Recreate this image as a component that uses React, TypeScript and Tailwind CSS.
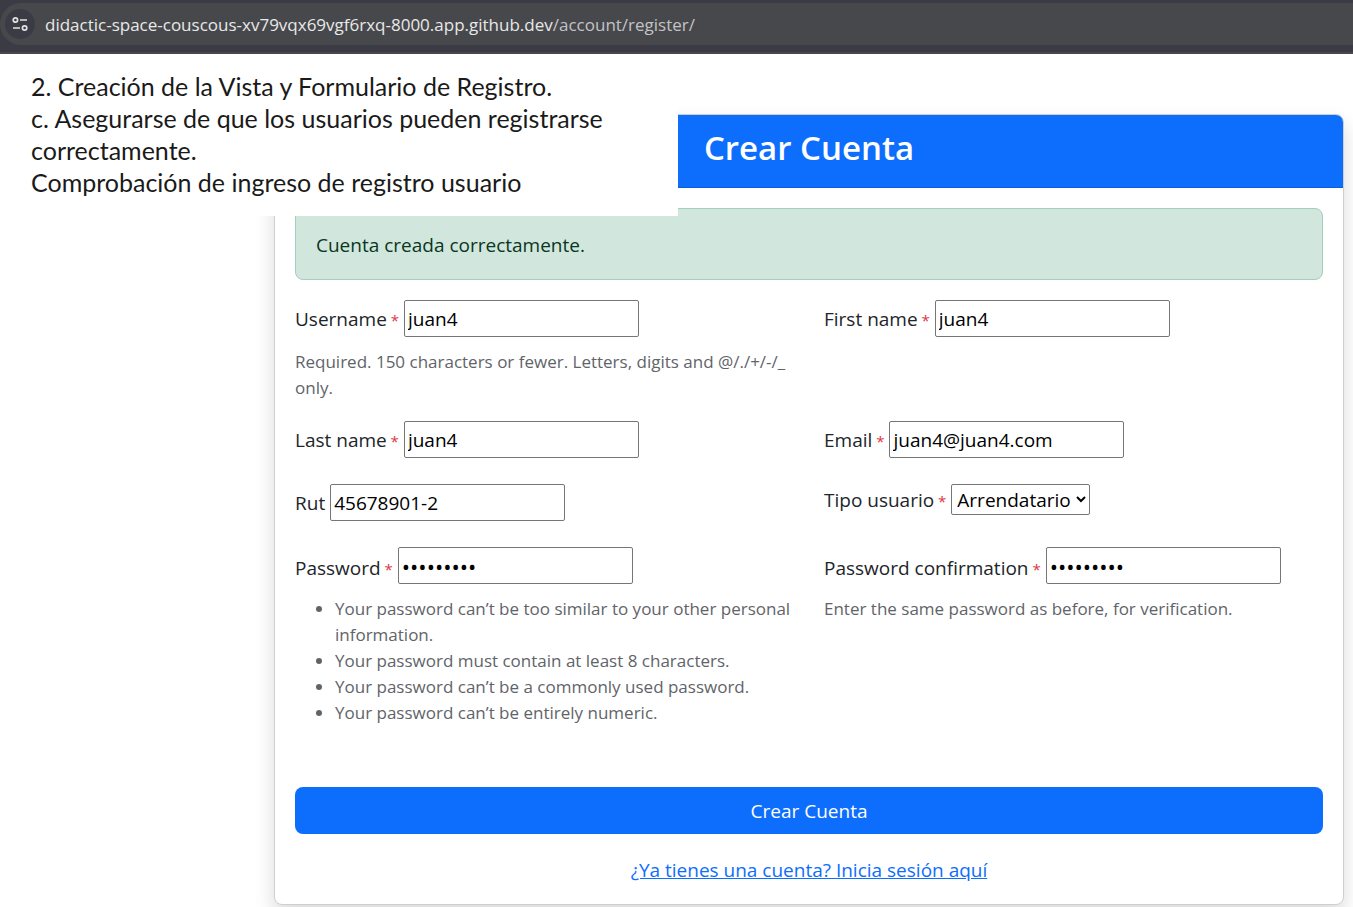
import type { ReactNode } from 'react';

const inputBase =
  'h-[37px] w-[235px] rounded-[2px] border border-[#767676] bg-white px-[3px] text-black outline-none';
const inputClass = `${inputBase} text-[19px]`;
const passwordClass = `${inputBase} text-[22px]`;

function Field({
  id,
  label,
  required,
  help,
  children,
}: {
  id: string;
  label: string;
  required?: boolean;
  help?: ReactNode;
  children: ReactNode;
}) {
  return (
    <div className="min-w-0">
      <div className="flex h-[43px] items-baseline gap-[5px]">
        <label htmlFor={id} className="whitespace-nowrap">
          {label}
          {required && <span className="text-[15px] text-[#dc3545]"> *</span>}
        </label>
        {children}
      </div>
      {help && <div className="mt-[6px] text-[17px] leading-[26px] text-[#5f6469]">{help}</div>}
    </div>
  );
}

function SettingsIcon() {
  return (
    <svg width="16" height="16" viewBox="0 0 16 16" fill="none" stroke="#e3e3e3" strokeWidth="1.7">
      <circle cx="3.4" cy="4" r="2.2" />
      <path d="M8 4h7M1 12h7" />
      <circle cx="12.6" cy="12" r="2.2" />
    </svg>
  );
}

function AddressBar() {
  return (
    <header className="h-[54px] border-b-2 border-[#4a474b] bg-[#3b3b45] pt-[3px]">
      <div className="flex h-[42px] items-center gap-[10px] rounded-l-full bg-[#47484c] pl-[5px]">
        <button
          type="button"
          aria-label="Información del sitio"
          className="flex size-[30px] shrink-0 items-center justify-center rounded-full bg-[#3b3b45]"
        >
          <SettingsIcon />
        </button>
        <span className="whitespace-nowrap pt-[2px] text-[17px] text-[#e8e8e8]">
          didactic-space-couscous-xv79vqx69vgf6rxq-8000.app.github.dev
          <span className="text-[#c3c3c5]">/account/register/</span>
        </span>
      </div>
    </header>
  );
}

function Note() {
  return (
    <section className="absolute left-0 top-[54px] w-[678px] bg-white pb-[18px] pl-[31px] pr-[60px] pt-[16px] font-['Lato',sans-serif] text-[25px] leading-[32px] text-[#1a1a1a]">
      <p>2. Creación de la Vista y Formulario de Registro.</p>
      <p>
        c. Asegurarse de que los usuarios pueden registrarse
        <br />
        correctamente.
      </p>
      <p>Comprobación de ingreso de registro usuario</p>
    </section>
  );
}

export default function App() {
  return (
    <div className="relative min-h-screen overflow-hidden bg-white font-['Open_Sans','Noto_Sans',sans-serif] text-[19px] leading-[30px] text-[#212529]">
      <AddressBar />
      <main className="pb-[2px] pl-[274px] pr-[9px] pt-[60px]">
        <div className="rounded-[8px] border border-[#cfcfcf] bg-white shadow-[0_10px_20px_rgba(0,0,0,0.15)]">
          <div className="rounded-t-[7px] border-b border-[#0b5ed7] bg-[#0d6efd] pb-[18px] pt-[12px] text-center">
            <h1 className="text-[33px] font-semibold leading-[42px] text-white">Crear Cuenta</h1>
          </div>
          <form className="p-[20px] pb-[19px]" onSubmit={(e) => e.preventDefault()}>
            <div
              role="alert"
              className="mb-[20px] rounded-[8px] border border-[#a3cfbb] bg-[#d1e7dd] px-[20px] pb-[19px] pt-[21px] text-[#0a3622]"
            >
              Cuenta creada correctamente.
            </div>
            <div className="grid grid-cols-2 gap-x-[30px] gap-y-[20px]">
              <Field
                id="username"
                label="Username"
                required
                help="Required. 150 characters or fewer. Letters, digits and @/./+/-/_ only."
              >
                <input id="username" type="text" defaultValue="juan4" className={inputClass} />
              </Field>
              <Field id="first_name" label="First name" required>
                <input id="first_name" type="text" defaultValue="juan4" className={inputClass} />
              </Field>
              <Field id="last_name" label="Last name" required>
                <input id="last_name" type="text" defaultValue="juan4" className={inputClass} />
              </Field>
              <Field id="email" label="Email" required>
                <input id="email" type="email" defaultValue="juan4@juan4.com" className={inputClass} />
              </Field>
              <Field id="rut" label="Rut">
                <input id="rut" type="text" defaultValue="45678901-2" className={inputClass} />
              </Field>
              <Field id="tipo_usuario" label="Tipo usuario" required>
                <select
                  id="tipo_usuario"
                  className="h-[31px] w-[139px] rounded-[2px] border border-[#767676] bg-white pl-[1px] text-[19px] text-black"
                >
                  <option>Arrendatario</option>
                </select>
              </Field>
              <Field
                id="password1"
                label="Password"
                required
                help={
                  <ul className="list-disc pl-[40px]">
                    <li>Your password can’t be too similar to your other personal information.</li>
                    <li>Your password must contain at least 8 characters.</li>
                    <li>Your password can’t be a commonly used password.</li>
                    <li>Your password can’t be entirely numeric.</li>
                  </ul>
                }
              >
                <input id="password1" type="password" defaultValue="juanjuan4" className={passwordClass} />
              </Field>
              <Field
                id="password2"
                label="Password confirmation"
                required
                help="Enter the same password as before, for verification."
              >
                <input id="password2" type="password" defaultValue="juanjuan4" className={passwordClass} />
              </Field>
            </div>
            <button
              type="submit"
              className="mt-[61px] block h-[47px] w-full rounded-[8px] bg-[#0d6efd] text-white"
            >
              Crear Cuenta
            </button>
            <p className="mt-[21px] text-center">
              <a href="#login" className="text-[#0d6efd] underline">
                ¿Ya tienes una cuenta? Inicia sesión aquí
              </a>
            </p>
          </form>
        </div>
      </main>
      <Note />
    </div>
  );
}
